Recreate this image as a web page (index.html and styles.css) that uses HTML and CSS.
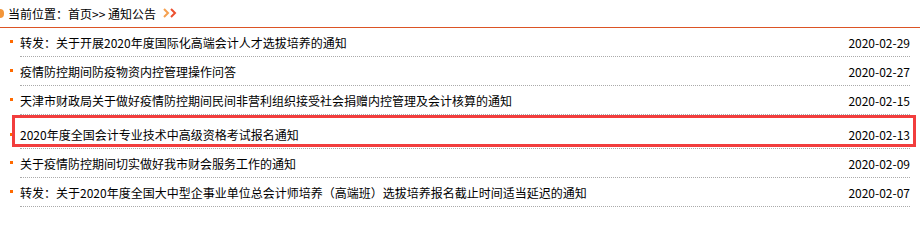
FILE: index.html
```html
<!DOCTYPE html>
<html lang="zh-CN">
<head>
<meta charset="utf-8">
<title>通知公告</title>
<link rel="stylesheet" href="styles.css">
</head>
<body>
<div class="crumb">
  <span class="crumb-icon"></span>
  <span class="crumb-text">当前位置：首页&gt;&gt; 通知公告</span>
  <svg class="crumb-arrows" width="14" height="10" viewBox="0 0 14 10" aria-hidden="true">
    <polyline points="1,1 5,5 1,9" fill="none" stroke="#f5a050" stroke-width="2"/>
    <polyline points="8,1 12,5 8,9" fill="none" stroke="#ec4f2e" stroke-width="2"/>
  </svg>
</div>
<ul class="news">
  <li class="item"><span class="dot"><i></i></span><a class="body"><span class="title">转发：关于开展2020年度国际化高端会计人才选拔培养的通知</span><span class="date">2020-02-29</span></a></li>
  <li class="item"><span class="dot"><i></i></span><a class="body"><span class="title">疫情防控期间防疫物资内控管理操作问答</span><span class="date">2020-02-27</span></a></li>
  <li class="item"><span class="dot"><i></i></span><a class="body"><span class="title">天津市财政局关于做好疫情防控期间民间非营利组织接受社会捐赠内控管理及会计核算的通知</span><span class="date">2020-02-15</span></a></li>
  <li class="item hl"><span class="dot"><i></i></span><a class="body"><span class="title">2020年度全国会计专业技术中高级资格考试报名通知</span><span class="date">2020-02-13</span></a><span class="frame"></span></li>
  <li class="item"><span class="dot"><i></i></span><a class="body"><span class="title">关于疫情防控期间切实做好我市财会服务工作的通知</span><span class="date">2020-02-09</span></a></li>
  <li class="item"><span class="dot"><i></i></span><a class="body"><span class="title">转发：关于2020年度全国大中型企事业单位总会计师培养（高端班）选拔培养报名截止时间适当延迟的通知</span><span class="date">2020-02-07</span></a></li>
</ul>
</body>
</html>
```
FILE: styles.css
```css
html, body {
  margin: 0;
  padding: 0;
  background: #fff;
}
body {
  width: 920px;
  height: 213px;
  overflow: hidden;
  font-family: "Noto Sans CJK SC", "Noto Sans", sans-serif;
  font-size: 12px;
  color: #000;
}
.crumb {
  display: flex;
  align-items: center;
  height: 27px;
  border-bottom: 1px solid #dc5424;
}
.crumb-icon {
  width: 4px;
  height: 9px;
  margin-right: 4px;
  margin-top: -1px;
  background: #f3963a;
  border-radius: 0 5px 5px 0;
}
.crumb-text {
  line-height: 27px;
}
.crumb-arrows {
  margin-left: 7px;
  margin-top: -1px;
}
.news {
  list-style: none;
  margin: 0;
  padding: 0 0 0 10px;
  width: 900px;
}
.item {
  display: flex;
  position: relative;
}
.dot {
  width: 10px;
  flex: none;
}
.dot i {
  display: block;
  width: 3px;
  height: 3px;
  margin-top: 12px;
  background: #ff6a00;
}
.body {
  flex: 1;
  display: flex;
  justify-content: space-between;
  height: 28px;
  line-height: 29px;
  border-bottom: 1px dotted #aaa;
  color: #000;
  text-decoration: none;
}
.date {
  flex: none;
}
.hl {
  padding-top: 5px;
}
.hl .dot i {
  margin-top: 13px;
}
.frame {
  position: absolute;
  left: 2px;
  top: 0;
  width: 898px;
  height: 26px;
  border: 3px solid #f23d3d;
}
```
